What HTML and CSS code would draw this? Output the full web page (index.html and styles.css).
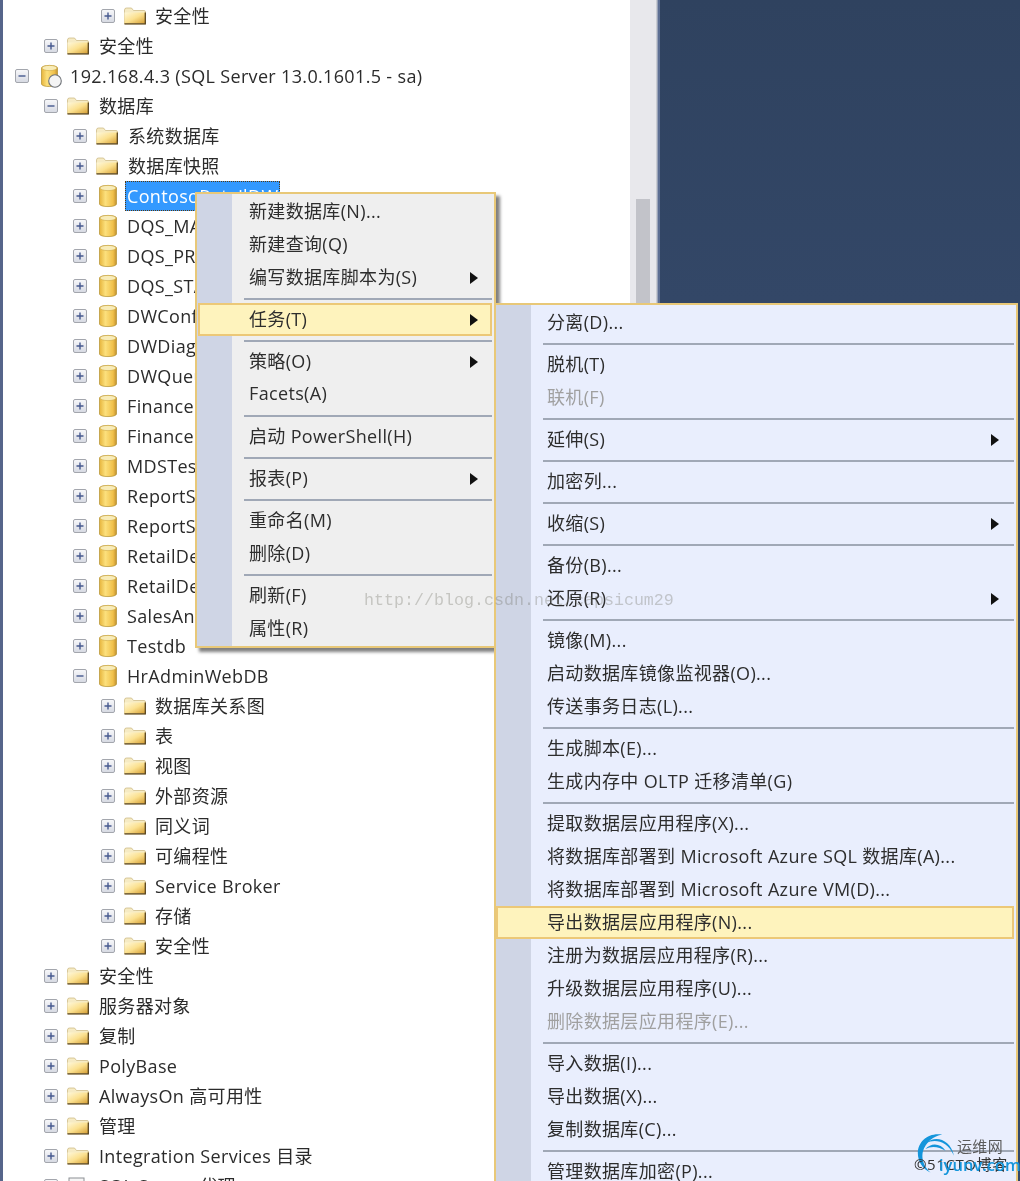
FILE: index.html
```html
<!DOCTYPE html>
<html lang="zh-CN">
<head>
<meta charset="utf-8">
<title>SQL Server Object Explorer</title>
<link rel="stylesheet" href="styles.css">
</head>
<body>
<svg class="defs" width="0" height="0" aria-hidden="true">
  <defs>
    <linearGradient id="fg" x1="0" y1="0" x2="1" y2="1">
      <stop offset="0" stop-color="#fff8da"/><stop offset=".5" stop-color="#fbe08e"/><stop offset="1" stop-color="#d49c30"/>
    </linearGradient>
    <linearGradient id="dg" x1="0" y1="0" x2="1" y2="0">
      <stop offset="0" stop-color="#e6b43c"/><stop offset=".35" stop-color="#fce07c"/><stop offset=".8" stop-color="#f0c04a"/><stop offset="1" stop-color="#c09030"/>
    </linearGradient>
    <linearGradient id="bx" x1="0" y1="0" x2="0" y2="1">
      <stop offset="0" stop-color="#f8f8fa"/><stop offset="1" stop-color="#d6d9e2"/>
    </linearGradient>
    <symbol id="plus" viewBox="0 0 14 14">
      <rect x=".5" y=".5" width="13" height="13" rx="1.5" fill="url(#bx)" stroke="#a3a6ad"/>
      <path d="M3.5 7h7M7 3.5v7" stroke="#46598f" stroke-width="1.4"/>
    </symbol>
    <symbol id="minus" viewBox="0 0 14 14">
      <rect x=".5" y=".5" width="13" height="13" rx="1.5" fill="url(#bx)" stroke="#a3a6ad"/>
      <path d="M3.5 7h7" stroke="#46598f" stroke-width="1.4"/>
    </symbol>
    <symbol id="folder" viewBox="0 0 22 18">
      <path d="M.5 3Q.5 1 2.500 1h5l2 2.500h10.500q1.500 0 1.500 1.500V17H.5z" fill="#f6ebc4" stroke="#c8b47c" stroke-width=".7"/>
      <path d="M.5 5.500h21v11H.5z" fill="url(#fg)"/>
      <path d="M21.300 5.500V16.800H.5" fill="none" stroke="#5a4620" stroke-width="1.300"/>
    </symbol>
    <symbol id="db" viewBox="0 0 20 24">
      <path d="M1.500 4C1.500 .6 18.500 .6 18.500 4V20c0 3.400-17 3.400-17 0z" fill="url(#dg)" stroke="#b3902f" stroke-width=".7"/>
      <ellipse cx="10" cy="4" rx="8" ry="2.600" fill="#f8ecb8" stroke="#d0ac4c" stroke-width=".6"/>
    </symbol>
    <symbol id="server" viewBox="0 0 24 24">
      <path d="M1.500 4C1.500 .6 17.500 .6 17.500 4V20c0 3.400-16 3.400-16 0z" fill="url(#dg)" stroke="#b3902f" stroke-width=".7"/>
      <ellipse cx="9.500" cy="4" rx="7.500" ry="2.600" fill="#f8ecb8" stroke="#d0ac4c" stroke-width=".6"/>
      <circle cx="15" cy="17" r="6.300" fill="#f4f4f4" stroke="#6f7378" stroke-width="1.100"/>
    </symbol>
    <symbol id="agent" viewBox="0 0 22 18">
      <rect x="2" y="1" width="15" height="17" fill="#f6f6f6" stroke="#8c8f94"/>
      <path d="M5 5h9M5 9h9" stroke="#8c8f94"/>
    </symbol>
  </defs>
</svg>

<div class="app">
  <div class="tree">
    <div class="row l4"><svg class="exp"><use href="#plus"/></svg><svg class="ico-f"><use href="#folder"/></svg><span class="label">安全性</span></div>
    <div class="row l2"><svg class="exp"><use href="#plus"/></svg><svg class="ico-f"><use href="#folder"/></svg><span class="label">安全性</span></div>
    <div class="row l1"><svg class="exp"><use href="#minus"/></svg><svg class="ico-s"><use href="#server"/></svg><span class="label">192.168.4.3 (SQL Server 13.0.1601.5 - sa)</span></div>
    <div class="row l2"><svg class="exp"><use href="#minus"/></svg><svg class="ico-f"><use href="#folder"/></svg><span class="label">数据库</span></div>
    <div class="row l3"><svg class="exp"><use href="#plus"/></svg><svg class="ico-f"><use href="#folder"/></svg><span class="label">系统数据库</span></div>
    <div class="row l3"><svg class="exp"><use href="#plus"/></svg><svg class="ico-f"><use href="#folder"/></svg><span class="label">数据库快照</span></div>
    <div class="row l3"><svg class="exp"><use href="#plus"/></svg><svg class="ico-d"><use href="#db"/></svg><span class="label selected">ContosoRetailDW</span></div>
    <div class="row l3"><svg class="exp"><use href="#plus"/></svg><svg class="ico-d"><use href="#db"/></svg><span class="label">DQS_MAIN</span></div>
    <div class="row l3"><svg class="exp"><use href="#plus"/></svg><svg class="ico-d"><use href="#db"/></svg><span class="label">DQS_PROJECTS</span></div>
    <div class="row l3"><svg class="exp"><use href="#plus"/></svg><svg class="ico-d"><use href="#db"/></svg><span class="label">DQS_STAGING_DATA</span></div>
    <div class="row l3"><svg class="exp"><use href="#plus"/></svg><svg class="ico-d"><use href="#db"/></svg><span class="label">DWConfiguration</span></div>
    <div class="row l3"><svg class="exp"><use href="#plus"/></svg><svg class="ico-d"><use href="#db"/></svg><span class="label">DWDiagnostics</span></div>
    <div class="row l3"><svg class="exp"><use href="#plus"/></svg><svg class="ico-d"><use href="#db"/></svg><span class="label">DWQueue</span></div>
    <div class="row l3"><svg class="exp"><use href="#plus"/></svg><svg class="ico-d"><use href="#db"/></svg><span class="label">FinanceDB</span></div>
    <div class="row l3"><svg class="exp"><use href="#plus"/></svg><svg class="ico-d"><use href="#db"/></svg><span class="label">FinanceDW</span></div>
    <div class="row l3"><svg class="exp"><use href="#plus"/></svg><svg class="ico-d"><use href="#db"/></svg><span class="label">MDSTest</span></div>
    <div class="row l3"><svg class="exp"><use href="#plus"/></svg><svg class="ico-d"><use href="#db"/></svg><span class="label">ReportServer</span></div>
    <div class="row l3"><svg class="exp"><use href="#plus"/></svg><svg class="ico-d"><use href="#db"/></svg><span class="label">ReportServerTempDB</span></div>
    <div class="row l3"><svg class="exp"><use href="#plus"/></svg><svg class="ico-d"><use href="#db"/></svg><span class="label">RetailDemoDB</span></div>
    <div class="row l3"><svg class="exp"><use href="#plus"/></svg><svg class="ico-d"><use href="#db"/></svg><span class="label">RetailDemoDW</span></div>
    <div class="row l3"><svg class="exp"><use href="#plus"/></svg><svg class="ico-d"><use href="#db"/></svg><span class="label">SalesAnalysis</span></div>
    <div class="row l3"><svg class="exp"><use href="#plus"/></svg><svg class="ico-d"><use href="#db"/></svg><span class="label">Testdb</span></div>
    <div class="row l3"><svg class="exp"><use href="#minus"/></svg><svg class="ico-d"><use href="#db"/></svg><span class="label">HrAdminWebDB</span></div>
    <div class="row l4"><svg class="exp"><use href="#plus"/></svg><svg class="ico-f"><use href="#folder"/></svg><span class="label">数据库关系图</span></div>
    <div class="row l4"><svg class="exp"><use href="#plus"/></svg><svg class="ico-f"><use href="#folder"/></svg><span class="label">表</span></div>
    <div class="row l4"><svg class="exp"><use href="#plus"/></svg><svg class="ico-f"><use href="#folder"/></svg><span class="label">视图</span></div>
    <div class="row l4"><svg class="exp"><use href="#plus"/></svg><svg class="ico-f"><use href="#folder"/></svg><span class="label">外部资源</span></div>
    <div class="row l4"><svg class="exp"><use href="#plus"/></svg><svg class="ico-f"><use href="#folder"/></svg><span class="label">同义词</span></div>
    <div class="row l4"><svg class="exp"><use href="#plus"/></svg><svg class="ico-f"><use href="#folder"/></svg><span class="label">可编程性</span></div>
    <div class="row l4"><svg class="exp"><use href="#plus"/></svg><svg class="ico-f"><use href="#folder"/></svg><span class="label">Service Broker</span></div>
    <div class="row l4"><svg class="exp"><use href="#plus"/></svg><svg class="ico-f"><use href="#folder"/></svg><span class="label">存储</span></div>
    <div class="row l4"><svg class="exp"><use href="#plus"/></svg><svg class="ico-f"><use href="#folder"/></svg><span class="label">安全性</span></div>
    <div class="row l2"><svg class="exp"><use href="#plus"/></svg><svg class="ico-f"><use href="#folder"/></svg><span class="label">安全性</span></div>
    <div class="row l2"><svg class="exp"><use href="#plus"/></svg><svg class="ico-f"><use href="#folder"/></svg><span class="label">服务器对象</span></div>
    <div class="row l2"><svg class="exp"><use href="#plus"/></svg><svg class="ico-f"><use href="#folder"/></svg><span class="label">复制</span></div>
    <div class="row l2"><svg class="exp"><use href="#plus"/></svg><svg class="ico-f"><use href="#folder"/></svg><span class="label">PolyBase</span></div>
    <div class="row l2"><svg class="exp"><use href="#plus"/></svg><svg class="ico-f"><use href="#folder"/></svg><span class="label">AlwaysOn 高可用性</span></div>
    <div class="row l2"><svg class="exp"><use href="#plus"/></svg><svg class="ico-f"><use href="#folder"/></svg><span class="label">管理</span></div>
    <div class="row l2"><svg class="exp"><use href="#plus"/></svg><svg class="ico-f"><use href="#folder"/></svg><span class="label">Integration Services 目录</span></div>
    <div class="row l2"><svg class="exp"><use href="#plus"/></svg><svg class="ico-f"><use href="#agent"/></svg><span class="label">SQL Server 代理</span></div>
  </div>
  <div class="scrollbar"><div class="thumb"></div></div>
  <div class="splitter"></div>
  <div class="workspace"></div>

  <div class="menu menu-main">
    <div class="item"><span class="text">新建数据库(N)...</span></div>
    <div class="item"><span class="text">新建查询(Q)</span></div>
    <div class="item"><span class="text">编写数据库脚本为(S)</span><i class="arrow"></i></div>
    <div class="sep"></div>
    <div class="item hot"><span class="text">任务(T)</span><i class="arrow"></i></div>
    <div class="sep"></div>
    <div class="item"><span class="text">策略(O)</span><i class="arrow"></i></div>
    <div class="item"><span class="text">Facets(A)</span></div>
    <div class="sep"></div>
    <div class="item"><span class="text">启动 PowerShell(H)</span></div>
    <div class="sep"></div>
    <div class="item"><span class="text">报表(P)</span><i class="arrow"></i></div>
    <div class="sep"></div>
    <div class="item"><span class="text">重命名(M)</span></div>
    <div class="item"><span class="text">删除(D)</span></div>
    <div class="sep"></div>
    <div class="item"><span class="text">刷新(F)</span></div>
    <div class="item"><span class="text">属性(R)</span></div>
  </div>

  <div class="menu menu-sub">
    <div class="item"><span class="text">分离(D)...</span></div>
    <div class="sep"></div>
    <div class="item"><span class="text">脱机(T)</span></div>
    <div class="item off"><span class="text">联机(F)</span></div>
    <div class="sep"></div>
    <div class="item"><span class="text">延伸(S)</span><i class="arrow"></i></div>
    <div class="sep"></div>
    <div class="item"><span class="text">加密列...</span></div>
    <div class="sep"></div>
    <div class="item"><span class="text">收缩(S)</span><i class="arrow"></i></div>
    <div class="sep"></div>
    <div class="item"><span class="text">备份(B)...</span></div>
    <div class="item"><span class="text">还原(R)</span><i class="arrow"></i></div>
    <div class="sep"></div>
    <div class="item"><span class="text">镜像(M)...</span></div>
    <div class="item"><span class="text">启动数据库镜像监视器(O)...</span></div>
    <div class="item"><span class="text">传送事务日志(L)...</span></div>
    <div class="sep"></div>
    <div class="item"><span class="text">生成脚本(E)...</span></div>
    <div class="item"><span class="text">生成内存中 OLTP 迁移清单(G)</span></div>
    <div class="sep"></div>
    <div class="item"><span class="text">提取数据层应用程序(X)...</span></div>
    <div class="item"><span class="text">将数据库部署到 Microsoft Azure SQL 数据库(A)...</span></div>
    <div class="item"><span class="text">将数据库部署到 Microsoft Azure VM(D)...</span></div>
    <div class="item hot"><span class="text">导出数据层应用程序(N)...</span></div>
    <div class="item"><span class="text">注册为数据层应用程序(R)...</span></div>
    <div class="item"><span class="text">升级数据层应用程序(U)...</span></div>
    <div class="item off"><span class="text">删除数据层应用程序(E)...</span></div>
    <div class="sep"></div>
    <div class="item"><span class="text">导入数据(I)...</span></div>
    <div class="item"><span class="text">导出数据(X)...</span></div>
    <div class="item"><span class="text">复制数据库(C)...</span></div>
    <div class="sep"></div>
    <div class="item"><span class="text">管理数据库加密(P)...</span></div>
  </div>

  <div class="watermark">http://blog.csdn.net/capsicum29</div>

  <div class="logo">
    <svg class="logo-arc" viewBox="0 0 50 50" aria-hidden="true">
      <path d="M30 2C14-1 1 10 1 24c0 10 6 19 15 23C8 40 5 31 7 22 10 11 20 3 30 2z" fill="#1495db"/>
      <path d="M44 27C40 8 22 2 11 12c10-5 25-3 33 15z" fill="#1495db"/>
      <path d="M34 21C28 12 17 11 10 19c7-4 16-3 24 2z" fill="#1495db"/>
    </svg>
    <span class="logo-cn">运维网</span>
    <span class="logo-cto">©51CTO博客</span>
    <span class="logo-url">iyunv.com</span>
  </div>
</div>
</body>
</html>
```

FILE: styles.css
```css
html, body {
  margin: 0;
  padding: 0;
  background: #fff;
}

.defs {
  position: absolute;
}

.app {
  position: relative;
  display: flex;
  width: 1020px;
  height: 1181px;
  overflow: hidden;
  font-family: "Open Sans", "Noto Sans CJK SC", sans-serif;
  font-size: 18px;
  letter-spacing: 0.34px;
  color: #2b2b2b;
  filter: blur(0.5px);
}

.tree {
  flex: 0 0 630px;
  box-sizing: border-box;
  padding-top: 1px;
  border-left: 3px solid #56658a;
  background: #fff;
}

.row {
  display: flex;
  align-items: center;
  height: 30px;
  white-space: nowrap;
}

.l1 { padding-left: 12px; }
.l2 { padding-left: 41px; }
.l3 { padding-left: 70px; }
.l4 { padding-left: 98px; }

.exp {
  flex: none;
  width: 14px;
  height: 14px;
  margin-right: 9px;
}

.ico-f {
  flex: none;
  width: 22px;
  height: 18px;
  margin-right: 8px;
}

.ico-d {
  flex: none;
  width: 20px;
  height: 24px;
  margin: 0 7px 0 2px;
}

.ico-s {
  flex: none;
  width: 24px;
  height: 24px;
  margin: 0 4px 0 2px;
}

.label {
  margin-left: 2px;
  line-height: 30px;
}

.l4 .label {
  margin-left: 1px;
}

.l3 .selected {
  box-sizing: border-box;
  height: 30px;
  margin: 0;
  padding: 0 1px;
  line-height: 28px;
  background: #3399ff;
  color: #fff;
  border: 1px dotted #5a3a10;
}

.scrollbar {
  flex: 0 0 26px;
  background: #e8e8ec;
}

.thumb {
  width: 14px;
  height: 110px;
  margin: 199px 0 0 6px;
  background: #c2c3c9;
}

.splitter {
  flex: 0 0 4px;
  box-sizing: border-box;
  background: #9aa3b8;
  border-left: 1px solid #c9ccd2;
  border-right: 2px solid #5d6f93;
}

.workspace {
  flex: 1;
  background: linear-gradient(#2f425f, #334767 300px);
}

.menu {
  position: absolute;
  box-sizing: border-box;
  border: 2px solid #e8c878;
  color: #2d2d2d;
}

.menu-main {
  left: 195px;
  top: 192px;
  width: 301px;
  height: 456px;
  padding: 1px 2px 2px 0;
  background: linear-gradient(to right, #cfd5e5 35px, #efefef 35px);
  box-shadow: 4px 4px 3px rgba(60, 60, 60, 0.65);
}

.menu-sub {
  left: 494px;
  top: 303px;
  width: 524px;
  height: 920px;
  padding: 1px 2px 2px 0;
  background: linear-gradient(to right, #cfd5e5 35px, #e9eefd 35px);
}

.item {
  position: relative;
  display: flex;
  align-items: center;
  box-sizing: border-box;
  height: 33px;
  padding-left: 52px;
  white-space: nowrap;
}

.text {
  margin-bottom: 3px;
}

.menu-sub .item {
  padding-left: 51px;
}

.item.hot {
  margin-left: 1px;
  padding-left: 49px;
  background: #fef3bd;
  border: 2px solid #ecc877;
}

.menu-sub .item.hot {
  margin-left: 0;
  padding-left: 49px;
}

.item.off {
  color: #a0a0a0;
}

.arrow {
  position: absolute;
  top: 50%;
  right: 14px;
  margin-top: -6px;
  border-left: 8px solid #111;
  border-top: 6px solid transparent;
  border-bottom: 6px solid transparent;
}

.hot .arrow {
  right: 12px;
}

.menu-sub .arrow {
  right: 15px;
}

.sep {
  height: 2px;
  margin: 4px 0 3px 47px;
  background: #a0a8b6;
}

.watermark {
  position: absolute;
  left: 364px;
  top: 591px;
  font-family: "Liberation Mono", monospace;
  font-size: 16.67px;
  line-height: 20px;
  letter-spacing: 0;
  color: rgba(110, 110, 95, 0.32);
  white-space: nowrap;
}

.logo {
  position: absolute;
  left: 913px;
  top: 1130px;
  width: 107px;
  height: 51px;
}

.logo-arc {
  position: absolute;
  left: 4px;
  top: 3px;
  width: 42px;
  height: 42px;
}

.logo-cn {
  position: absolute;
  left: 44px;
  top: 7px;
  font-size: 15px;
  line-height: 18px;
  color: #5a5a5a;
}

.logo-cto {
  position: absolute;
  left: 1px;
  top: 24px;
  font-size: 15px;
  line-height: 20px;
  letter-spacing: 0.6px;
  color: #333;
  white-space: nowrap;
}

.logo-url {
  position: absolute;
  left: 26px;
  top: 25px;
  font-size: 16.500px;
  line-height: 20px;
  font-weight: 600;
  letter-spacing: 0;
  color: #1495db;
}
```
